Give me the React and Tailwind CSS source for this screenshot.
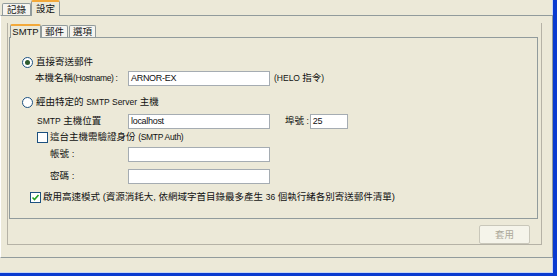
import React from "react";

const F = "font-['Liberation_Sans','Noto_Sans_CJK_TC',sans-serif]";

function Radio({ checked }) {
  return (
    <span className="w-[11px] h-[11px] rounded-full border border-[#1c5180] bg-white flex items-center justify-center shrink-0">
      {checked && <span className="w-[5px] h-[5px] rounded-full bg-[#2d5a2d]" />}
    </span>
  );
}

function Check({ checked }) {
  return (
    <span className="w-[11px] h-[11px] border border-[#1c5180] bg-white flex items-center justify-center shrink-0">
      {checked && (
        <svg width="9" height="9" viewBox="0 0 9 9">
          <path d="M1.5 4.5 L3.5 6.5 L7.5 2" stroke="#21a121" strokeWidth="1.6" fill="none" />
        </svg>
      )}
    </span>
  );
}

function Input({ w, value }) {
  return (
    <div className={`h-[15px] border border-[#a5acb2] bg-white flex items-center px-[2px] text-[9px] tracking-[-0.3px] shrink-0 ${w}`}>
      {value}
    </div>
  );
}

export default function App() {
  return (
    <div className={`w-[557px] h-[276px] bg-[#ece9d8] text-[#111] text-[9.5px] leading-none ${F} overflow-hidden whitespace-nowrap`}>
      <div className="w-[557px] h-[276px] border-r-[4px] border-b-[3px] border-[#0a3bd0] flex flex-col">
        <div className="w-[553px] h-[273px] border-r border-b border-[#c9d6f4] flex flex-col">
          {/* outer tabs */}
          <div className="flex items-end h-[15px] pl-[2px] relative z-10">
            <div className="h-[12px] w-[29px] border border-b-0 border-[#919b9c] bg-[#f5f4ef] flex items-center justify-center rounded-t-[2px]">
              記錄
            </div>
            <div className="h-[16px] w-[29px] -mb-px border border-b-0 border-[#919b9c] border-t-[2px] border-t-[#f3a93a] bg-[#ece9d8] flex items-center justify-center rounded-t-[2px]">
              設定
            </div>
          </div>
          {/* outer pane */}
          <div className="w-[553px] h-[243px] border border-[#919b9c] border-l-white pl-[6px] pr-[10px] pt-[7px] flex flex-col">
            <div className="w-[535px] h-[222px] border-l border-r border-b border-[#b5b2a6] flex flex-col">
              {/* inner tabs */}
              <div className="flex items-end h-[14px] pl-[2px] relative z-10">
                <div className="h-[14px] w-[31px] -mb-px border border-b-0 border-[#919b9c] border-t-[2px] border-t-[#f3a93a] bg-[#ece9d8] flex items-center justify-center rounded-t-[2px]">
                  SMTP
                </div>
                <div className="h-[12px] w-[27px] border border-b-0 border-[#919b9c] bg-[#f5f4ef] flex items-center justify-center rounded-t-[2px]">
                  郵件
                </div>
                <div className="h-[12px] w-[27px] ml-[1px] border border-b-0 border-[#919b9c] bg-[#f5f4ef] flex items-center justify-center rounded-t-[2px]">
                  選項
                </div>
              </div>
              {/* SMTP pane */}
              <div className="ml-[1px] w-[529px] h-[182px] border border-[#919b9c] flex flex-col pl-[12px]">
                <div className="h-[14px] mt-[17px] flex items-center gap-[3px]">
                  <Radio checked />
                  <span>直接寄送郵件</span>
                </div>
                <div className="h-[14px] mt-[2px] flex items-center pl-[13px]">
                  <span className="w-[93px]">
                    本機名稱<span className="text-[8.5px] tracking-[-0.4px]">(Hostname) :</span>
                  </span>
                  <Input w="w-[142px]" value="ARNOR-EX" />
                  <span className="ml-[4px]">
                    <span className="text-[8.5px]">(HELO </span>指令<span className="text-[8.5px]">)</span>
                  </span>
                </div>
                <div className="h-[14px] mt-[10px] flex items-center gap-[3px]">
                  <Radio />
                  <span>
                    經由特定的 <span className="text-[8.5px]">SMTP Server</span> 主機
                  </span>
                </div>
                <div className="h-[14px] mt-[5px] flex items-center pl-[15px]">
                  <span className="w-[91px]">
                    <span className="text-[8.5px]">SMTP</span> 主機位置
                  </span>
                  <Input w="w-[142px]" value="localhost" />
                  <span className="ml-[15px] mr-[1px]">
                    埠號<span className="text-[8.5px]"> :</span>
                  </span>
                  <Input w="w-[38px]" value="25" />
                </div>
                <div className="h-[14px] mt-[2px] flex items-center pl-[15px] gap-[2px]">
                  <Check />
                  <span>
                    這台主機需驗證身份 <span className="text-[8.5px] tracking-[-0.3px]">(SMTP Auth)</span>
                  </span>
                </div>
                <div className="h-[14px] mt-[3px] flex items-center pl-[28px]">
                  <span className="w-[78px]">帳號 :</span>
                  <Input w="w-[142px]" />
                </div>
                <div className="h-[14px] mt-[8px] flex items-center pl-[28px]">
                  <span className="w-[78px]">密碼 :</span>
                  <Input w="w-[142px]" />
                </div>
                <div className="h-[14px] mt-[7px] flex items-center pl-[8px] gap-[2px]">
                  <Check checked />
                  <span>
                    啟用高速模式 (資源消耗大, 依網域字首目錄最多產生 <span className="text-[8.5px]">36</span> 個執行緒各別寄送郵件清單)
                  </span>
                </div>
              </div>
              {/* button row */}
              <div className="flex justify-end pr-[11px] mt-[6px]">
                <div className="w-[51px] h-[19px] border border-[#c9c7ba] rounded-[2px] bg-[#f5f4ea] text-[#aca899] flex items-center justify-center">
                  套用
                </div>
              </div>
            </div>
          </div>
        </div>
      </div>
    </div>
  );
}
